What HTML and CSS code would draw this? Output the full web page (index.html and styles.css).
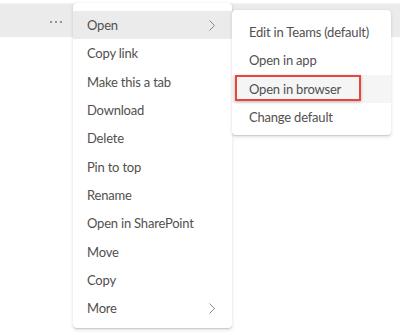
FILE: index.html
```html
<!DOCTYPE html>
<html lang="en">
<head>
  <meta charset="UTF-8">
  <meta name="viewport" content="width=device-width, initial-scale=1.0">
  <title>File menu</title>
  <link rel="stylesheet" href="styles.css">
</head>
<body>
  <div class="page">
    <div class="file-row">
      <span class="dots"><i></i><i></i><i></i></span>
    </div>

    <ul class="menu main-menu">
      <li class="active">Open
        <svg class="chev" width="6" height="11" viewBox="0 0 6 11"><polyline points="0.5,0.5 5.5,5.5 0.5,10.5"/></svg>
      </li>
      <li>Copy link</li>
      <li>Make this a tab</li>
      <li>Download</li>
      <li>Delete</li>
      <li>Pin to top</li>
      <li>Rename</li>
      <li>Open in SharePoint</li>
      <li>Move</li>
      <li>Copy</li>
      <li>More
        <svg class="chev" width="6" height="11" viewBox="0 0 6 11"><polyline points="0.5,0.5 5.5,5.5 0.5,10.5"/></svg>
      </li>
    </ul>

    <ul class="menu sub-menu">
      <li>Edit in Teams (default)</li>
      <li>Open in app</li>
      <li class="hover">Open in browser</li>
      <li>Change default</li>
    </ul>

    <div class="callout"></div>
  </div>
</body>
</html>
```

FILE: styles.css
```css
body {
  margin: 0;
  background: #fff;
  font-family: "Segoe UI", Lato, "Noto Sans", sans-serif;
  font-size: 13px;
  letter-spacing: -0.2px;
  color: #52504e;
}

.page {
  position: relative;
  width: 400px;
  height: 335px;
  overflow: hidden;
}

.file-row {
  margin-top: 3px;
  height: 34px;
  background: #ebebeb;
  border-top: 1px solid #f3f3f3;
  box-sizing: border-box;
  display: flex;
  align-items: center;
}

.dots {
  display: flex;
  gap: 3px;
  margin-left: 50px;
  margin-top: 2px;
}

.dots i {
  width: 2px;
  height: 2px;
  border-radius: 50%;
  background: #777;
}

.menu {
  position: absolute;
  margin: 0;
  list-style: none;
  width: 159px;
  box-sizing: border-box;
  background: #fff;
  border-radius: 4px;
  box-shadow: 0 1.6px 3.6px rgba(0, 0, 0, 0.13), 0 0.3px 0.9px rgba(0, 0, 0, 0.11);
}

.menu li {
  height: 28.3px;
  display: flex;
  align-items: center;
  justify-content: space-between;
  white-space: nowrap;
}

.main-menu {
  left: 73px;
  top: 3px;
  padding: 8px 0 6px;
}

.main-menu li {
  padding: 0 17px 0 14px;
}

.main-menu li.active {
  background: #ebebeb;
}

.chev {
  fill: none;
  stroke: #8a8886;
  stroke-width: 1;
}

.sub-menu {
  left: 232px;
  top: 10px;
  padding: 8px 0 4px;
}

.sub-menu li {
  padding: 0 10px 0 17px;
}

.sub-menu li.hover {
  background: #f5f5f5;
}

.callout {
  position: absolute;
  left: 235px;
  top: 75px;
  width: 126px;
  height: 26px;
  box-sizing: border-box;
  border: 2px solid #e8453c;
  box-shadow: 0 1px 3px rgba(0, 0, 0, 0.25);
}
```
